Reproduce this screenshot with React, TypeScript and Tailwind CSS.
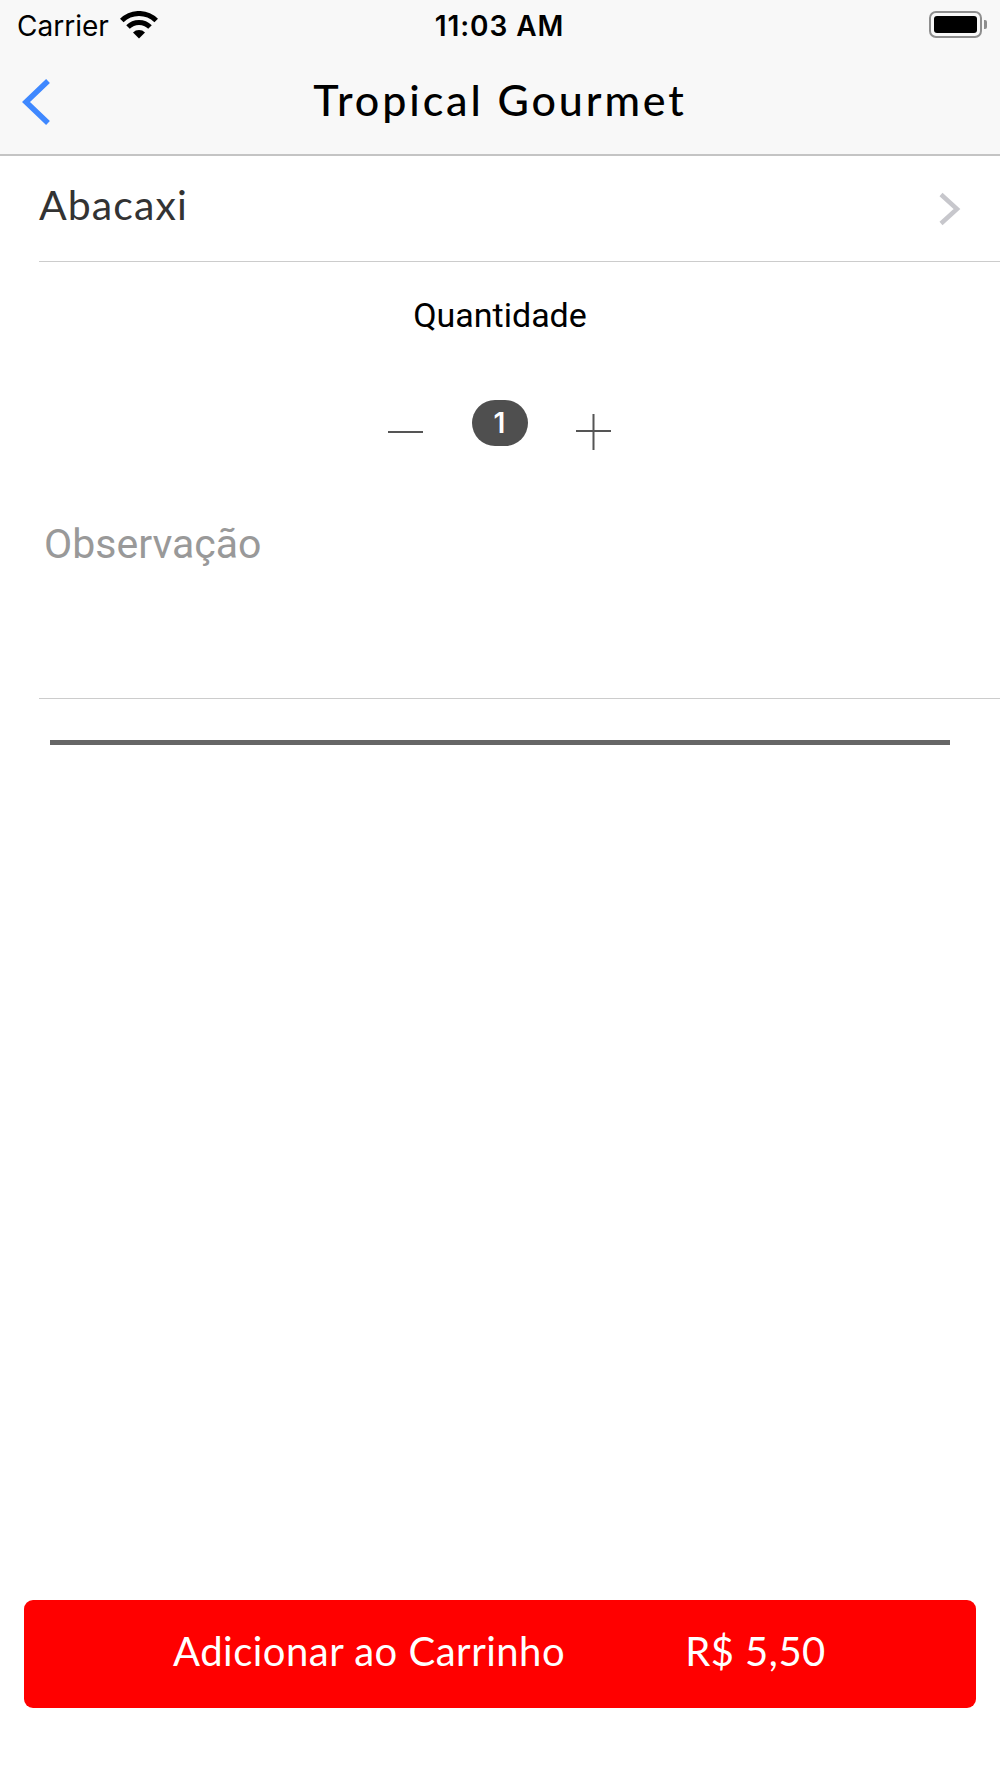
/**
 * Product detail screen: Tropical Gourmet
 */

const lato = "font-['Lato','Liberation_Sans',sans-serif]";

function WifiIcon() {
  return (
    <svg width="38" height="28" viewBox="0 0 38 28" className="block">
      <path d="M1.8 9.6a24.3 24.3 0 0 1 34.4 0" fill="none" stroke="#000" strokeWidth="5" />
      <path d="M8 16a15.6 15.6 0 0 1 22 0" fill="none" stroke="#000" strokeWidth="5" />
      <path d="M13 21.5a8.5 8.5 0 0 1 12 0L19 27.5z" fill="#000" />
    </svg>
  );
}

function BatteryIcon() {
  return (
    <div className="flex items-center">
      <div className="w-[53px] h-[27px] rounded-[7px] border-2 border-[#8e8e8e] p-[3px]">
        <div className="w-full h-full rounded-[3px] bg-black" />
      </div>
      <div className="ml-[2px] w-[3px] h-[9px] rounded-r-[2px] bg-[#8e8e8e]" />
    </div>
  );
}

function StatusBar() {
  return (
    <div className="h-[46px] pt-[3px] grid grid-cols-3 items-center pl-[17px] pr-[13px] font-['Inter','Liberation_Sans',sans-serif] text-black">
      <div className="flex items-center gap-[11px]">
        <span className="text-[28px] leading-none pt-[2px]">Carrier</span>
        <WifiIcon />
      </div>
      <div className="text-center text-[28px] leading-none font-semibold tracking-[0.9px] pt-[2px] pr-[5px]">11:03 AM</div>
      <div className="flex justify-end">
        <BatteryIcon />
      </div>
    </div>
  );
}

function NavBar() {
  return (
    <div className="h-[110px] pb-[1px] grid grid-cols-[1fr_auto_1fr] items-center border-b-2 border-[#c4c4c4]">
      <div className="pl-[20px] pt-[5px]">
        <svg width="32" height="48" viewBox="0 0 32 48" className="block">
          <path d="M28 3 6 24l22 21" fill="none" stroke="#3f88ff" strokeWidth="5.5" />
        </svg>
      </div>
      <div className={`${lato} text-[43px] leading-none tracking-[2.9px] text-black font-medium`}>Tropical Gourmet</div>
      <div />
    </div>
  );
}

function QuantityPicker() {
  return (
    <div className="flex items-start justify-center pr-[2px]">
      <div className="mt-[31px] w-[35px] h-[2px] bg-[#555555]" />
      <div className="mx-[49px] w-[56px] h-[46px] rounded-[23px] bg-[#4f4f4f] flex items-center justify-center text-white text-[28px] font-semibold leading-none font-['Inter','Liberation_Sans',sans-serif]">
        1
      </div>
      <svg width="35" height="36" viewBox="0 0 35 36" className="mt-[14px] block -ml-[1px]">
        <path d="M0 17h35M17.5 0v36" stroke="#555555" strokeWidth="2" fill="none" />
      </svg>
    </div>
  );
}

export default function App() {
  return (
    <div className="w-[1000px] h-[1778px] bg-white flex flex-col overflow-hidden">
      <div className="bg-[#f8f8f8]">
        <StatusBar />
        <NavBar />
      </div>

      {/* Selected flavour row */}
      <div className="ml-[39px] h-[106px] border-b border-[#cccccc] flex items-center justify-between pr-[38px]">
        <span className={`${lato} text-[41px] leading-none text-[#333333] tracking-[1.1px] pb-[8px]`}>Abacaxi</span>
        <svg width="24" height="34" viewBox="0 0 24 34" className="block">
          <path d="M3 2.5 19 17 3 31.5" fill="none" stroke="#c7c7cc" strokeWidth="4.5" />
        </svg>
      </div>

      <div className="pt-[33px] text-center font-['Roboto','Liberation_Sans',sans-serif] text-[34px] leading-[40px] text-black">
        Quantidade
      </div>

      <div className="mt-[65px]">
        <QuantityPicker />
      </div>

      {/* Notes field */}
      <div className="mt-[72px] ml-[39px] h-[177px] border-b border-[#cccccc] pl-[5px] font-['Roboto','Liberation_Sans',sans-serif] text-[41px] leading-[44px] text-[#999999]">
        Observação
      </div>

      <div className="mt-[41px] mx-[50px] h-[5px] bg-[#666666]" />

      <button className={`${lato} mt-auto mb-[70px] mx-[24px] h-[108px] pb-[6px] rounded-[9px] bg-[#ff0000] text-white text-[40px] leading-none tracking-[0.5px] flex items-center`}>
        <span className="ml-[149px]">Adicionar ao Carrinho</span>
        <span className="ml-[120px]">R$ 5,50</span>
      </button>
    </div>
  );
}
